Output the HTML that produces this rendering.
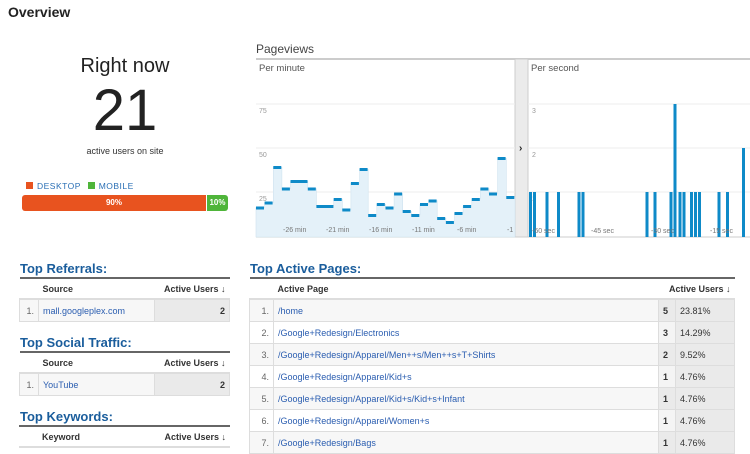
<!DOCTYPE html>
<html><head><meta charset="utf-8"><style>
body{margin:0;width:750px;height:442px;overflow:hidden;background:#fff;font-family:"Liberation Sans",Arial,sans-serif;position:relative}
.a{position:absolute}
.h{color:#1a5d9c;font-weight:bold;font-size:13px}
table{border-collapse:collapse;font-size:9px;position:absolute;border-top:2px solid #666}
td{height:21px;border:1px solid #ddd;padding:0 4px;color:#333}
th{height:19px;text-align:left;font-weight:bold;color:#333;padding:0 4px;border-bottom:2px solid #ddd}
a,.l{color:#2a5db0}
.g{background:#eaeaea}
.n{color:#666;text-align:right}
</style></head><body>
<div class="a" style="left:8px;top:4px;font-weight:bold;font-size:14px;color:#222">Overview</div>
<div class="a" style="left:0;width:250px;top:55px;text-align:center;font-size:20px;color:#222">Right now</div>
<div class="a" style="left:0;width:250px;top:79px;text-align:center;font-size:58px;color:#222;line-height:64px">21</div>
<div class="a" style="left:0;width:250px;top:146px;text-align:center;font-size:9px;color:#333">active users on site</div>
<div class="a" style="left:26px;top:181px;font-size:8.5px;color:#2a6fb5;letter-spacing:.5px"><span style="display:inline-block;width:7px;height:7px;background:#e8531f;margin-right:4px"></span>DESKTOP <span style="display:inline-block;width:7px;height:7px;background:#4fb53a;margin:0 4px 0 4px"></span>MOBILE</div>
<div class="a" style="left:22px;top:195px;width:184px;height:16px;background:#e8531f;border-radius:3px 0 0 3px;color:#fff;font-size:8px;font-weight:bold;text-align:center;line-height:16px">90%</div>
<div class="a" style="left:206px;top:195px;width:22px;height:16px;background:#4fb53a;border-radius:0 3px 3px 0;color:#fff;font-size:8px;font-weight:bold;text-align:center;line-height:16px;border-left:1px solid #fff;box-sizing:border-box">10%</div>

<div class="a" style="left:256px;top:42px;font-size:12px;color:#444">Pageviews</div>
<svg class="a" style="left:0;top:0" width="750" height="442">
<line x1="256" y1="59" x2="750" y2="59" stroke="#ccc" stroke-width="2"/>
<line x1="256" y1="237" x2="750" y2="237" stroke="#ccc" stroke-width="1"/>
<rect x="515" y="59" width="13" height="178" fill="#ebebeb" stroke="#ccc"/>
<text x="519" y="151" font-size="10" font-weight="bold" fill="#222">›</text>
<g stroke="#eee"><line x1="256" y1="104" x2="515" y2="104"/><line x1="256" y1="148" x2="515" y2="148"/><line x1="256" y1="192" x2="515" y2="192"/>
<line x1="528" y1="104" x2="750" y2="104"/><line x1="528" y1="148" x2="750" y2="148"/><line x1="528" y1="192" x2="750" y2="192"/></g>
<text x="259" y="71" font-size="9.5" fill="#555">Per minute</text>
<text x="531" y="71" font-size="9.5" fill="#555">Per second</text>
<g font-size="7" fill="#999"><text x="259" y="113">75</text><text x="259" y="157">50</text><text x="259" y="201">25</text>
<text x="532" y="113">3</text><text x="532" y="157">2</text><text x="532" y="201">1</text></g>
<path fill="#e4f1f9" stroke="#cfe3ef" stroke-width=".6" d="M256 237 V207.7 H264.6 V202.7 H273.3 V167.3 H281.9 V188.7 H290.5 V181.3 H307.8 V188.7 H316.4 V206 H333.7 V199 H342.3 V209.7 H350.9 V183.3 H359.6 V169.3 H368.2 V215 H376.8 V204.3 H385.5 V207.7 H394.1 V193.7 H402.7 V211.3 H411.3 V215 H420 V204.3 H428.6 V200.7 H437.2 V218.3 H445.9 V222 H454.5 V213 H463.1 V206 H471.8 V199 H480.4 V188.7 H489 V193.7 H497.6 V158.3 H506.3 V197.3 H515 V237 Z"/>
<g fill="#0e8ac8">
<rect x="256" y="206.5" width="8" height="3"/><rect x="264.6" y="201.5" width="8" height="3"/><rect x="273.3" y="166" width="8" height="3"/><rect x="281.9" y="187.5" width="8" height="3"/><rect x="290.5" y="180" width="17" height="3"/><rect x="307.8" y="187.5" width="8" height="3"/><rect x="316.4" y="205" width="17" height="3"/><rect x="333.7" y="198" width="8" height="3"/><rect x="342.3" y="208.5" width="8" height="3"/><rect x="350.9" y="182" width="8" height="3"/><rect x="359.6" y="168" width="8" height="3"/><rect x="368.2" y="214" width="8" height="3"/><rect x="376.8" y="203" width="8" height="3"/><rect x="385.5" y="206.5" width="8" height="3"/><rect x="394.1" y="192.5" width="8" height="3"/><rect x="402.7" y="210" width="8" height="3"/><rect x="411.3" y="214" width="8" height="3"/><rect x="420" y="203" width="8" height="3"/><rect x="428.6" y="199.5" width="8" height="3"/><rect x="437.2" y="217" width="8" height="3"/><rect x="445.9" y="221" width="8" height="3"/><rect x="454.5" y="212" width="8" height="3"/><rect x="463.1" y="205" width="8" height="3"/><rect x="471.8" y="198" width="8" height="3"/><rect x="480.4" y="187.5" width="8" height="3"/><rect x="489" y="192.5" width="8" height="3"/><rect x="497.6" y="157" width="8" height="3"/><rect x="506.3" y="196" width="8" height="3"/>
</g>
<g fill="#0e8ac8">
<rect x="529" y="192" width="3" height="45"/><rect x="533" y="192" width="3" height="45"/><rect x="545.5" y="192" width="3" height="45"/><rect x="557" y="192" width="3" height="45"/><rect x="577.5" y="192" width="3" height="45"/><rect x="581.5" y="192" width="3" height="45"/><rect x="645.5" y="192" width="3" height="45"/><rect x="653.5" y="192" width="3" height="45"/><rect x="669.5" y="192" width="3" height="45"/><rect x="673.5" y="104" width="3" height="133"/><rect x="678.5" y="192" width="3" height="45"/><rect x="682.5" y="192" width="3" height="45"/><rect x="690" y="192" width="3" height="45"/><rect x="694" y="192" width="3" height="45"/><rect x="698" y="192" width="3" height="45"/><rect x="717.5" y="192" width="3" height="45"/><rect x="726" y="192" width="3" height="45"/><rect x="742" y="148" width="3" height="89"/>
</g>
<g font-size="7" fill="#777"><text x="283" y="232">-26 min</text><text x="326" y="232">-21 min</text><text x="369" y="232">-16 min</text><text x="412" y="232">-11 min</text><text x="457" y="232">-6 min</text><text x="507" y="232">-1</text>
<text x="532" y="233">-60 sec</text><text x="591" y="233">-45 sec</text><text x="651" y="233">-30 sec</text><text x="710" y="233">-15 sec</text></g>
</svg>

<div class="a h" style="left:20px;top:261px">Top Referrals:</div>
<table style="left:19px;top:277px;width:211px;table-layout:fixed"><tr><th style="width:11px"></th><th style="width:108px">Source</th><th style="text-align:right">Active Users ↓</th></tr>
<tr><td class="n" style="background:#f7f7f7">1.</td><td class="l" style="background:#f7f7f7">mall.googleplex.com</td><td class="g" style="text-align:right;font-weight:bold">2</td></tr></table>
<div class="a h" style="left:20px;top:335px">Top Social Traffic:</div>
<table style="left:19px;top:351px;width:211px;table-layout:fixed"><tr><th style="width:11px"></th><th style="width:108px">Source</th><th style="text-align:right">Active Users ↓</th></tr>
<tr><td class="n" style="background:#f7f7f7">1.</td><td class="l" style="background:#f7f7f7">YouTube</td><td class="g" style="text-align:right;font-weight:bold">2</td></tr></table>
<div class="a h" style="left:20px;top:409px">Top Keywords:</div>
<table style="left:19px;top:425px;width:211px;table-layout:fixed"><tr><th style="width:11px"></th><th style="width:108px">Keyword</th><th style="text-align:right">Active Users ↓</th></tr></table>

<div class="a h" style="left:250px;top:261px">Top Active Pages:</div>
<table style="left:249px;top:277px;width:486px"><tr><th style="width:16px"></th><th>Active Page</th><th colspan="2" style="text-align:right">Active Users ↓</th></tr>
<tr style="background:#f7f7f7"><td class="n">1.</td><td class="l">/home</td><td class="g" style="width:8px;font-weight:bold">5</td><td class="g" style="width:50px">23.81%</td></tr>
<tr><td class="n">2.</td><td class="l">/Google+Redesign/Electronics</td><td style="font-weight:bold;background:#f4f4f4">3</td><td class="g">14.29%</td></tr>
<tr style="background:#f7f7f7"><td class="n">3.</td><td class="l">/Google+Redesign/Apparel/Men++s/Men++s+T+Shirts</td><td class="g" style="font-weight:bold">2</td><td class="g">9.52%</td></tr>
<tr><td class="n">4.</td><td class="l">/Google+Redesign/Apparel/Kid+s</td><td style="font-weight:bold;background:#f4f4f4">1</td><td class="g">4.76%</td></tr>
<tr style="background:#f7f7f7"><td class="n">5.</td><td class="l">/Google+Redesign/Apparel/Kid+s/Kid+s+Infant</td><td class="g" style="font-weight:bold">1</td><td class="g">4.76%</td></tr>
<tr><td class="n">6.</td><td class="l">/Google+Redesign/Apparel/Women+s</td><td style="font-weight:bold;background:#f4f4f4">1</td><td class="g">4.76%</td></tr>
<tr style="background:#f7f7f7"><td class="n">7.</td><td class="l">/Google+Redesign/Bags</td><td class="g" style="font-weight:bold">1</td><td class="g">4.76%</td></tr>
</table>
</body></html>
